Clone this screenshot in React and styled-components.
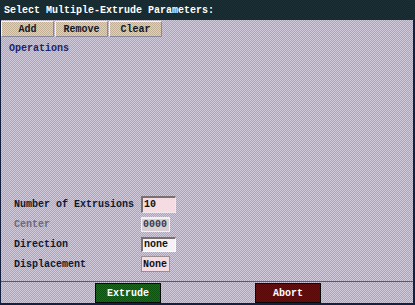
import React from "react";
import styled, { createGlobalStyle, css } from "styled-components";

const Global = createGlobalStyle`
  html, body { margin: 0; padding: 0; background: #1a2840; }
  body { width: 415px; height: 305px; overflow: hidden; }
`;

const dither = (a, b) => css`
  background-color: ${a};
  background-image: repeating-conic-gradient(${a} 0 25%, ${b} 0 50%);
  background-size: 2px 2px;
`;

const Window = styled.div`
  box-sizing: border-box;
  width: 415px;
  height: 305px;
  display: flex;
  flex-direction: column;
  border-left: 1px solid #142040;
  border-right: 2px solid #142040;
  border-bottom: 2px solid #142040;
  ${dither("#d0cada", "#bca688")}
  font-family: "Liberation Mono", "DejaVu Sans Mono", monospace;
  font-size: 10px;
  font-weight: bold;
`;

const TitleBar = styled.div`
  height: 20px;
  margin-left: -1px;
  margin-right: -2px;
  display: flex;
  align-items: center;
  padding-left: 4px;
  color: #ffffff;
  ${dither("#14224a", "#1c3036")}
`;

const Toolbar = styled.div`
  display: flex;
  gap: 1px;
  padding-top: 1px;
  height: 16px;
`;

const ToolButton = styled.div`
  box-sizing: border-box;
  width: ${(p) => p.$w}px;
  height: 16px;
  display: flex;
  align-items: center;
  justify-content: center;
  color: #101828;
  border-top: 1px solid #f4f2f8;
  border-left: 1px solid #f4f2f8;
  border-right: 1px solid #8a8898;
  border-bottom: 1px solid #8a8898;
  ${dither("#d4d0e0", "#c2b096")}
`;

const Body = styled.div`
  flex: 1;
  display: flex;
  flex-direction: column;
  padding: 6px 0 0 8px;
`;

const SectionLabel = styled.div`
  color: #1c2468;
  line-height: 12px;
`;

const Form = styled.div`
  margin-top: auto;
  display: grid;
  grid-template-columns: 127px auto;
  grid-auto-rows: 20px;
  align-items: center;
  padding-left: 5px;
  padding-bottom: 7px;
`;

const Label = styled.div`
  color: ${(p) => (p.$disabled ? "#6c6a7c" : "#101830")};
`;

const variants = {
  pink: css`
    background: #f4dce2;
    color: #101010;
    border-top: 2px solid #7a7070;
    border-left: 2px solid #7a7070;
    border-right: 1px solid #f0e8ec;
    border-bottom: 1px solid #f0e8ec;
  `,
  grey: css`
    background: #d6d0d4;
    color: #3a3a48;
    border: 1px solid #f2f0f4;
    border-top: 2px solid #f2f0f4;
  `,
  white: css`
    background: #f4f2f4;
    color: #101010;
    border-top: 2px solid #7a7070;
    border-left: 2px solid #7a7070;
    border-right: 1px solid #fafafa;
    border-bottom: 1px solid #fafafa;
  `,
  pinkflat: css`
    background: #f4dce2;
    color: #101010;
    border: 1px solid #9a8e8e;
  `,
};

const Field = styled.div`
  box-sizing: border-box;
  width: ${(p) => p.$w}px;
  height: ${(p) => p.$h}px;
  display: flex;
  align-items: center;
  padding-left: 1px;
  overflow: hidden;
  white-space: nowrap;
  ${(p) => variants[p.$variant]}
`;

const Footer = styled.div`
  border-top: 1px solid #5a5a68;
  padding-top: 1px;
  height: 20px;
  display: flex;
  gap: 94px;
  padding-left: 94px;
`;

const ActionButton = styled.div`
  box-sizing: border-box;
  width: 66px;
  height: 20px;
  display: flex;
  align-items: center;
  justify-content: center;
  color: #ffffff;
  border: 1px solid #0a0a0a;
  ${(p) =>
    p.$tone === "go" ? dither("#156c18", "#0c5410") : dither("#720a0c", "#5a0808")}
`;

const rows = [
  { label: "Number of Extrusions", value: "10", w: 35, h: 17, variant: "pink" },
  { label: "Center", value: "0000", w: 29, h: 15, variant: "grey", disabled: true },
  { label: "Direction", value: "none", w: 35, h: 15, variant: "white" },
  { label: "Displacement", value: "None", w: 29, h: 16, variant: "pinkflat" },
];

export default function App() {
  return (
    <>
      <Global />
      <Window>
        <TitleBar>Select Multiple-Extrude Parameters:</TitleBar>
        <Toolbar>
          <ToolButton $w={53}>Add</ToolButton>
          <ToolButton $w={53}>Remove</ToolButton>
          <ToolButton $w={53}>Clear</ToolButton>
        </Toolbar>
        <Body>
          <SectionLabel>Operations</SectionLabel>
          <Form>
            {rows.map((r) => (
              <React.Fragment key={r.label}>
                <Label $disabled={r.disabled}>{r.label}</Label>
                <Field $w={r.w} $h={r.h} $variant={r.variant}>
                  {r.value}
                </Field>
              </React.Fragment>
            ))}
          </Form>
        </Body>
        <Footer>
          <ActionButton $tone="go">Extrude</ActionButton>
          <ActionButton $tone="stop">Abort</ActionButton>
        </Footer>
      </Window>
    </>
  );
}
